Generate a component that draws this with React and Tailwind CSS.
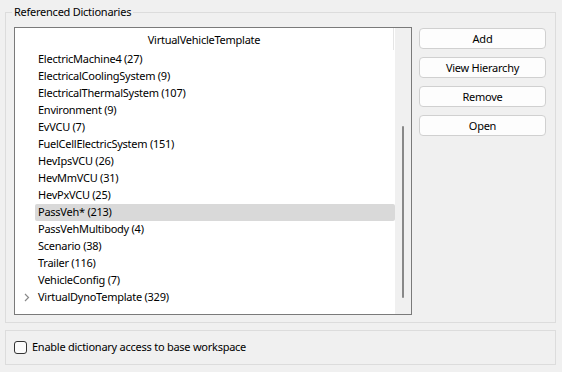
import React from "react";

const rows = [
  "ElectricMachine4 (27)",
  "ElectricalCoolingSystem (9)",
  "ElectricalThermalSystem (107)",
  "Environment (9)",
  "EvVCU (7)",
  "FuelCellElectricSystem (151)",
  "HevIpsVCU (26)",
  "HevMmVCU (31)",
  "HevPxVCU (25)",
  "PassVeh* (213)",
  "PassVehMultibody (4)",
  "Scenario (38)",
  "Trailer (116)",
  "VehicleConfig (7)",
  "VirtualDynoTemplate (329)",
];

function Btn({ children }) {
  return (
    <button className="w-[127px] h-[21px] rounded-[4px] border border-[#d0d0d0] bg-[#fdfdfd] text-[11px] tracking-[-0.25px] leading-[19px] text-black">
      {children}
    </button>
  );
}

export default function App() {
  return (
    <div
      className="w-[562px] h-[372px] bg-[#f0f0f0] px-[5px] pt-[12px] text-black text-[11px] tracking-[-0.25px]"
      style={{ fontFamily: '"Noto Sans", "Segoe UI", sans-serif' }}
    >
      <div className="relative w-[551px] h-[311px] border border-[#dcdcdc] pl-[8px] pt-[14px] flex gap-[7px]">
        <div className="absolute -top-[9px] left-[6px] px-[2px] bg-[#f0f0f0] leading-[16px]">
          Referenced Dictionaries
        </div>
        <div className="w-[398px] h-[288px] border border-[#7a7a7a] bg-white flex">
          <div className="w-[380px] flex flex-col">
            <div className="h-[23px] flex">
              <div className="w-[378px] flex items-center justify-center pt-[1px]">VirtualVehicleTemplate</div>
              <div className="w-px h-[22px] bg-[#e5e5e5]" />
            </div>
            {rows.map((r, i) => (
              <div key={r} className="h-[17px] flex items-center">
                <div className="w-[20px] h-full flex items-center justify-center pl-[4px]">
                  {i === rows.length - 1 && (
                    <svg width="6" height="9" viewBox="0 0 6 9">
                      <path d="M1 1 L4.5 4.5 L1 8" fill="none" stroke="#8a8a8a" strokeWidth="1.2" />
                    </svg>
                  )}
                </div>
                <div
                  className={
                    "flex-1 h-full flex items-center pl-[3px] rounded-[2px] " +
                    (r === "PassVeh* (213)" ? "bg-[#d9d9d9]" : "")
                  }
                >
                  {r}
                </div>
              </div>
            ))}
          </div>
          <div className="flex-1 bg-[#f0f0f0] flex justify-center pt-[98px]">
            <div className="w-[2px] h-[172px] rounded-full bg-[#888888] ml-[-1px]" />
          </div>
        </div>
        <div className="flex flex-col gap-[8px] pt-[1px]">
          <Btn>Add</Btn>
          <Btn>View Hierarchy</Btn>
          <Btn>Remove</Btn>
          <Btn>Open</Btn>
        </div>
      </div>
      <div className="mt-[7px] w-[551px] h-[35px] border border-[#dcdcdc] flex items-center pl-[8px] gap-[5px]">
        <div className="w-[13px] h-[13px] rounded-[3px] border border-[#333333] bg-[#fbfbfb]" />
        <span>Enable dictionary access to base workspace</span>
      </div>
    </div>
  );
}
